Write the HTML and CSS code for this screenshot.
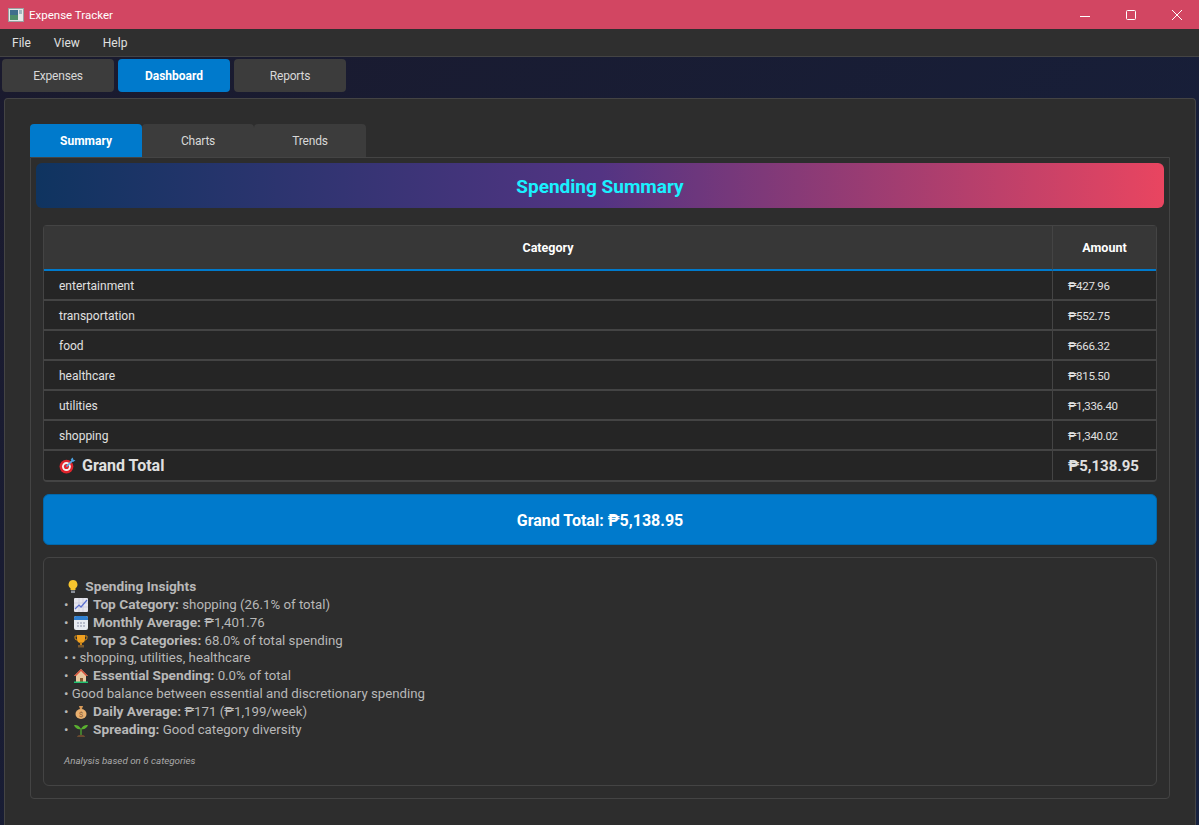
FILE: index.html
```html
<!DOCTYPE html>
<html lang="en">
<head>
  <meta charset="UTF-8">
  <title>Expense Tracker</title>
  <link rel="stylesheet" href="styles.css">
</head>
<body>

<div class="titlebar">
  <svg class="app-icon" width="16" height="14" viewBox="0 0 16 14">
    <rect x="0.5" y="0.5" width="15" height="13" fill="#e4e8e8" stroke="#9aa0a0"/>
    <rect x="2" y="2" width="8" height="10" fill="#3f6f8c"/>
    <rect x="2" y="7" width="8" height="5" fill="#4f8f6a"/>
    <rect x="11" y="2" width="3" height="4" fill="#9fb8c0"/>
  </svg>
  <span class="app-name">Expense Tracker</span>
  <div class="win-buttons">
    <svg width="12" height="12" viewBox="0 0 12 12"><path d="M1 7.500h10" stroke="#fff" fill="none"/></svg>
    <svg width="12" height="12" viewBox="0 0 12 12"><rect x="1.500" y="1.500" width="9" height="9" rx="1" stroke="#fff" fill="none"/></svg>
    <svg width="12" height="12" viewBox="0 0 12 12"><path d="M1 1l10 10M11 1L1 11" stroke="#fff" fill="none"/></svg>
  </div>
</div>

<div class="menubar">
  <span>File</span>
  <span>View</span>
  <span>Help</span>
</div>

<div class="main">
  <div class="tabs outer-tabs">
    <div class="tab">Expenses</div>
    <div class="tab active">Dashboard</div>
    <div class="tab">Reports</div>
  </div>

  <div class="panel">
    <div class="tabs inner-tabs">
      <div class="tab active">Summary</div>
      <div class="tab">Charts</div>
      <div class="tab">Trends</div>
    </div>

    <div class="pane">
      <div class="banner">Spending Summary</div>

      <table class="summary">
        <thead>
          <tr><th>Category</th><th class="amount-col">Amount</th></tr>
        </thead>
        <tbody>
          <tr><td>entertainment</td><td>₱427.96</td></tr>
          <tr><td>transportation</td><td>₱552.75</td></tr>
          <tr><td>food</td><td>₱666.32</td></tr>
          <tr><td>healthcare</td><td>₱815.50</td></tr>
          <tr><td>utilities</td><td>₱1,336.40</td></tr>
          <tr><td>shopping</td><td>₱1,340.02</td></tr>
          <tr class="total-row">
            <td>
              <svg class="target" width="17" height="17" viewBox="0 0 16 16">
                <circle cx="7" cy="9" r="6.500" fill="#e0242c"/>
                <circle cx="7" cy="9" r="4.200" fill="#f4f0f0"/>
                <circle cx="7" cy="9" r="2.400" fill="#e0242c"/>
                <path d="M7 9l6-6" stroke="#5aa8e0" stroke-width="1.500"/>
                <path d="M11 2l2-1.500 .5 2 2 .5L13 5z" fill="#4aa0e0"/>
              </svg>
              Grand Total
            </td>
            <td>₱5,138.95</td>
          </tr>
        </tbody>
      </table>

      <div class="grand-total">Grand Total: ₱5,138.95</div>

      <div class="insights">
        <div class="line">
          <svg class="ico" width="14" height="15" viewBox="0 0 14 15"><path d="M7 1a4.500 4.500 0 0 0-2.500 8.200V11h5V9.200A4.500 4.500 0 0 0 7 1z" fill="#f7c52e"/><rect x="5" y="11.500" width="4" height="2.500" fill="#8a8f98"/></svg>
          <b>Spending Insights</b>
        </div>
        <div class="line">•
          <svg class="ico" width="14" height="14" viewBox="0 0 14 14"><rect width="14" height="14" rx="1" fill="#e6e6ee"/><path d="M0 5h14M0 9h14M5 0v14M9 0v14" stroke="#c4c4d8" stroke-width=".6"/><path d="M1 11l4-4 2 2 6-7" stroke="#5a6fd0" stroke-width="1.200" fill="none"/></svg>
          <b>Top Category:</b> shopping (26.1% of total)
        </div>
        <div class="line">•
          <svg class="ico" width="14" height="14" viewBox="0 0 14 14"><rect width="14" height="14" rx="2" fill="#e8ecf2"/><path d="M0 2a2 2 0 0 1 2-2h10a2 2 0 0 1 2 2v2H0z" fill="#2f7fd0"/><path d="M3 7h2M6 7h2M9 7h2M3 10h2M6 10h2M9 10h2" stroke="#8a90a8"/></svg>
          <b>Monthly Average:</b> ₱1,401.76
        </div>
        <div class="line">•
          <svg class="ico" width="14" height="14" viewBox="0 0 14 14"><path d="M3 1h8v4a4 4 0 0 1-8 0z" fill="#f0a020"/><path d="M3 2H1v2a2 2 0 0 0 2 2M11 2h2v2a2 2 0 0 1-2 2" stroke="#d08a18" fill="none"/><rect x="6" y="8" width="2" height="3" fill="#c88418"/><rect x="4" y="11" width="6" height="2.500" fill="#7a5a30"/></svg>
          <b>Top 3 Categories:</b> 68.0% of total spending
        </div>
        <div class="line">• • shopping, utilities, healthcare</div>
        <div class="line">•
          <svg class="ico" width="14" height="14" viewBox="0 0 14 14"><path d="M7 0L0 7h2v7h10V7h2z" fill="#e8c8a0"/><path d="M7 0L0 7h2l5-5 5 5h2z" fill="#d8503a"/><rect x="6" y="9" width="3" height="5" fill="#8a5a30"/><rect x="0" y="12.500" width="14" height="1.500" fill="#20c070"/></svg>
          <b>Essential Spending:</b> 0.0% of total
        </div>
        <div class="line">• Good balance between essential and discretionary spending</div>
        <div class="line">•
          <svg class="ico" width="14" height="14" viewBox="0 0 14 14"><ellipse cx="7" cy="9" rx="5.500" ry="5" fill="#e8b070"/><path d="M5 1h4L8 4H6z" fill="#d89a58"/><text class="bag-mark" x="7" y="12">$</text></svg>
          <b>Daily Average:</b> ₱171 (₱1,199/week)
        </div>
        <div class="line">•
          <svg class="ico" width="14" height="14" viewBox="0 0 14 14"><path d="M7 12V6" stroke="#4a9a30" stroke-width="1.500"/><path d="M7 6C5 2 2 2 0 2c1 3 4 5 7 4zM7 6c2-4 5-4 7-4-1 3-4 5-7 4z" fill="#5ab030"/><path d="M3 14c0-3 8-3 8 0z" fill="#6a4a30"/></svg>
          <b>Spreading:</b> Good category diversity
        </div>
        <div class="note">Analysis based on 6 categories</div>
      </div>
    </div>
  </div>
</div>

</body>
</html>
```

FILE: styles.css
```css
html, body {
  margin: 0;
  height: 825px;
  overflow: hidden;
}

body {
  font-family: Roboto, "Noto Sans", "Liberation Sans", sans-serif;
  font-size: 12px;
  color: #e0e0e0;
  background-color: #2d2d2d;
}

.titlebar {
  height: 29px;
  background: #d24662;
  display: flex;
  align-items: center;
  padding-left: 8px;
  color: #fff;
}
.app-icon {
  margin-right: 5px;
}
.app-name {
  font-size: 11.500px;
}
.win-buttons {
  margin-left: auto;
  display: flex;
  gap: 34px;
  padding-right: 16px;
}

.menubar {
  height: 27px;
  background: #2f2f2f;
  border-bottom: 1px solid #444;
  display: flex;
  align-items: center;
  gap: 23px;
  padding-left: 12px;
}

.main {
  height: 768px;
  background: linear-gradient(135deg, #1a1a2e, #16213e);
  padding: 2px 3px 0 4px;
}

.tabs {
  display: flex;
}
.tab {
  width: 112px;
  height: 33px;
  line-height: 35px;
  text-align: center;
  background: #3c3c3c;
  color: #d8d8d8;
  letter-spacing: -0.200px;
  border-radius: 4px;
}
.tab.active {
  background: #007acc;
  color: #fff;
  letter-spacing: 0;
  font-weight: bold;
}
.outer-tabs {
  gap: 4px;
  margin-left: -2px;
}
.inner-tabs .tab {
  border-radius: 4px 4px 0 0;
}

.panel {
  margin-top: 6px;
  height: 727px;
  box-sizing: border-box;
  background: #2d2d2d;
  border: 1px solid #444;
  border-bottom: none;
  border-radius: 4px 4px 0 0;
  padding: 25px 25px 0 25px;
}

.pane {
  height: 642px;
  box-sizing: border-box;
  border: 1px solid #444;
  border-radius: 0 0 4px 4px;
  padding: 5px;
}

.banner {
  height: 45px;
  line-height: 48px;
  text-align: center;
  font-size: 19px;
  font-weight: bold;
  color: #1af0ff;
  border-radius: 6px;
  background: linear-gradient(90deg, #0f3460, #533483 50%, #e94560);
}

.summary {
  width: 1114px;
  margin: 17px 0 0 7px;
  border-collapse: separate;
  border-spacing: 0;
  background: #252525;
  border: 1px solid #444;
  border-bottom-width: 2px;
  border-radius: 4px;
}
.summary th {
  height: 43px;
  padding: 0;
  background: #373737;
  color: #fff;
  font-size: 12.500px;
  font-weight: bold;
  border-bottom: 2px solid #007acc;
}
.summary th.amount-col {
  width: 103px;
  border-left: 1px solid #444;
}
.summary td {
  height: 26px;
  padding: 2px 0 0 15px;
  border-bottom: 2px solid #444;
  color: #e0e0e0;
}
.summary td + td {
  border-left: 1px solid #444;
  font-size: 11.500px;
  letter-spacing: -0.300px;
}
.summary .total-row td {
  height: 29px;
  padding-top: 0;
  border-bottom: none;
  font-size: 16px;
  font-weight: bold;
}
.summary .total-row td + td {
  font-size: 15px;
  letter-spacing: 0;
}
.target {
  vertical-align: -3px;
  margin-right: 2px;
}

.grand-total {
  width: 1114px;
  height: 51px;
  line-height: 52px;
  margin: 12px 0 0 7px;
  box-sizing: border-box;
  text-align: center;
  background: #007acc;
  color: #fff;
  font-size: 16px;
  font-weight: bold;
  border-radius: 6px;
  border: 1px solid #0068ad;
}

.insights {
  width: 1114px;
  height: 229px;
  margin: 12px 0 0 7px;
  box-sizing: border-box;
  border: 1px solid #444;
  border-radius: 6px;
  padding: 20px 0 0 20px;
  font-size: 13.250px;
  color: #b8b8b8;
}
.insights b {
  font-size: 13.700px;
}
.line {
  height: 17.850px;
  line-height: 17.850px;
  white-space: nowrap;
}
.ico {
  vertical-align: -3px;
  margin: 0 2px;
}
.bag-mark {
  font-size: 8px;
  text-anchor: middle;
  fill: #8a5a30;
}
.note {
  margin-top: 16px;
  font-size: 9.800px;
  font-style: italic;
  color: #aaa;
}
```
